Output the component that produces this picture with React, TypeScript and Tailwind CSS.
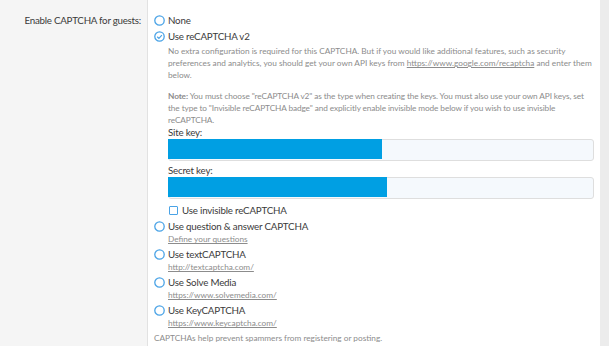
import React from 'react';

const Radio = ({ checked = false }: { checked?: boolean }) => (
	<svg width="11" height="11" viewBox="0 0 11 11" className="shrink-0">
		<circle cx="5.5" cy="5.5" r="4.7" fill="white" stroke="#4aa3e6" strokeWidth="1.3" />
		{checked && <path d="M3.2 5.7 L4.9 7.3 L7.9 4.1" fill="none" stroke="#4aa3e6" strokeWidth="1.2" />}
	</svg>
);

interface OptionProps {
	label: string;
	link: string;
}

const Option = ({ label, link }: OptionProps) => (
	<div className="flex flex-col h-[28px]">
		<div className="flex items-center gap-[3px] h-[14px]">
			<Radio />
			<span className="text-[9.75px] tracking-[-0.2px] text-[#3a3a3a]">{label}</span>
		</div>
		<div className="pl-[14px] h-[12px] leading-[12px] text-[8.25px] text-[#8c8c8c] underline">{link}</div>
	</div>
);

const KeyInput = ({ label, redact }: { label: string; redact: string }) => (
	<div className="flex flex-col">
		<div className="h-[13px] leading-[13px] text-[9.75px] tracking-[-0.2px] text-[#3a3a3a]">{label}</div>
		<div className="relative h-[22px] bg-[#f5f9fd] border border-[#dedede] rounded-[3px]">
			<div className={`absolute left-[-1px] top-[-1px] h-[20px] bg-[#009fe3] ${redact}`} />
		</div>
	</div>
);

const App = () => {
	return (
		<div className="flex w-[609px] h-[346px] bg-white overflow-hidden" style={{ fontFamily: 'Lato, "Noto Sans", sans-serif' }}>
			<div className="w-[148px] shrink-0 bg-[#f5f5f5] border-r border-[#e2e2e2] pt-[12px] pr-[6px] text-right">
				<div className="h-[16px] leading-[16px] text-[9.75px] tracking-[-0.25px] text-[#3a3a3a] whitespace-nowrap">Enable CAPTCHA for guests:</div>
			</div>
			<div className="flex-1 flex flex-col pt-[12px] pl-[6px] pr-[6px]">
				<div className="flex items-center gap-[3px] h-[16px]">
					<Radio />
					<span className="text-[9.75px] tracking-[-0.2px] text-[#3a3a3a]">None</span>
				</div>
				<div className="flex items-center gap-[3px] h-[17px]">
					<Radio checked />
					<span className="text-[9.75px] tracking-[-0.2px] text-[#3a3a3a]">Use reCAPTCHA v2</span>
				</div>
				<div className="pl-[14px] flex flex-col">
					<p className="text-[8.25px] leading-[12px] text-[#8c8c8c] whitespace-nowrap">
						No extra configuration is required for this CAPTCHA. But if you would like additional features, such as security
						<br />
						preferences and analytics, you should get your own API keys from{' '}
						<span className="underline">https://www.google.com/recaptcha</span> and enter them
						<br />
						below.
					</p>
					<p className="mt-[9px] text-[8.25px] leading-[12px] text-[#8c8c8c] whitespace-nowrap tracking-[-0.1px]">
						<strong className="font-bold">Note:</strong> You must choose "reCAPTCHA v2" as the type when creating the keys. You must also use your own API keys, set
						<br />
						the type to "Invisible reCAPTCHA badge" and explicitly enable invisible mode below if you wish to use invisible
						<br />
						reCAPTCHA.
					</p>
					<div className="flex flex-col gap-[3px]">
						<KeyInput label="Site key:" redact="w-[214px]" />
						<KeyInput label="Secret key:" redact="w-[219px]" />
					</div>
					<div className="flex items-center gap-[4px] h-[16px] mt-[3px] pl-[1px]">
						<span className="w-[9px] h-[9px] border border-[#4aa3e6] rounded-[1px] bg-white shrink-0" />
						<span className="text-[9.75px] tracking-[-0.2px] text-[#3a3a3a]">Use invisible reCAPTCHA</span>
					</div>
				</div>
				<div className="flex flex-col mt-[1px]">
					<Option label="Use question & answer CAPTCHA" link="Define your questions" />
					<Option label="Use textCAPTCHA" link="http://textcaptcha.com/" />
					<Option label="Use Solve Media" link="https://www.solvemedia.com/" />
					<Option label="Use KeyCAPTCHA" link="https://www.keycaptcha.com/" />
				</div>
				<div className="mt-[1px] h-[12px] leading-[12px] text-[8.25px] text-[#8c8c8c]">CAPTCHAs help prevent spammers from registering or posting.</div>
			</div>
			<div className="w-[9px] shrink-0 bg-[#ececec]" />
		</div>
	);
};

export default App;
